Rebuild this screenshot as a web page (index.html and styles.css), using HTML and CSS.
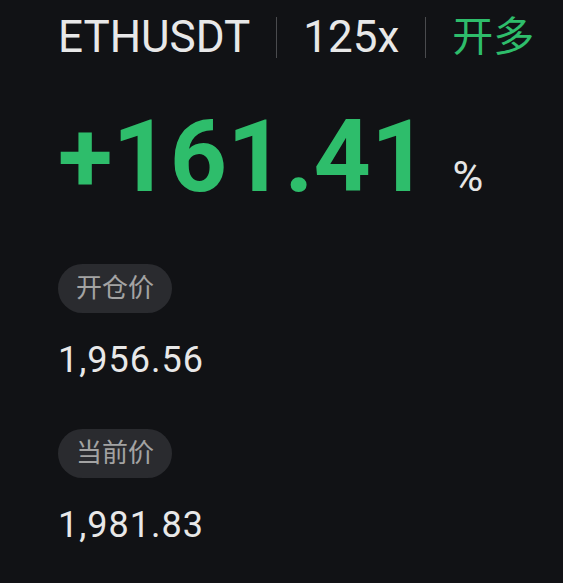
FILE: index.html
```html
<!DOCTYPE html>
<html lang="zh-CN">
<head>
    <meta charset="UTF-8">
    <meta name="viewport" content="width=device-width, initial-scale=1.0">
    <title>ETHUSDT 仓位</title>
    <link rel="stylesheet" href="styles.css">
</head>
<body>

<div class="card">
    <div class="header">
        <span class="symbol">ETHUSDT</span>
        <span class="sep"></span>
        <span class="leverage">125x</span>
        <span class="sep"></span>
        <span class="side">开多</span>
    </div>

    <div class="pnl">
        <span class="pnl-value">+161.41</span>
        <span class="pnl-unit">%</span>
    </div>

    <div class="field">
        <span class="label">开仓价</span>
        <div class="value">1,956.56</div>
    </div>

    <div class="field">
        <span class="label">当前价</span>
        <div class="value">1,981.83</div>
    </div>
</div>

</body>
</html>
```

FILE: styles.css
```css
body {
    margin: 0;
    background-color: #111215;
    font-family: Roboto, "Noto Sans CJK SC", sans-serif;
    color: #e8e8e8;
}
.card {
    padding: 15px 0 0 58px;
}
.header {
    display: flex;
    align-items: center;
    gap: 26px;
    height: 44px;
}
.symbol,
.leverage {
    font-size: 44px;
    line-height: 44px;
}
.sep {
    width: 1px;
    height: 41px;
    background-color: #4a4b4e;
}
.side {
    font-size: 41px;
    line-height: 44px;
    color: #2ebd6b;
}
.pnl {
    display: flex;
    align-items: baseline;
    margin-top: 48px;
}
.pnl-value {
    font-size: 100px;
    line-height: 100px;
    font-weight: 700;
    color: #2ebd6b;
}
.pnl-unit {
    margin-left: 24px;
    font-size: 42px;
    color: #e6e6e6;
}
.field {
    margin-top: 57px;
}
.field + .field {
    margin-top: 51px;
}
.label {
    display: inline-block;
    height: 49px;
    line-height: 49px;
    padding: 0 18px;
    border-radius: 25px;
    background-color: #2a2b2f;
    color: #a3a3a3;
    font-size: 26px;
}
.value {
    margin-top: 29px;
    font-size: 36px;
    line-height: 36px;
    letter-spacing: 1px;
}
```
